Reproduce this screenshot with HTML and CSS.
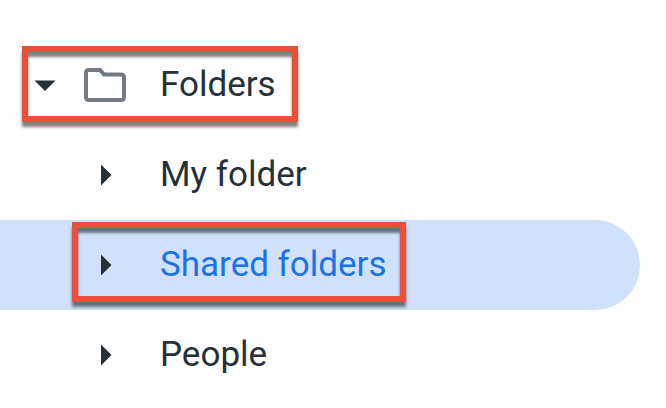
FILE: index.html
```html
<!DOCTYPE html>
<html lang="en">
<head>
<meta charset="utf-8">
<title>Folders</title>
<link rel="stylesheet" href="styles.css">
</head>
<body>
<nav class="tree" aria-label="Folders">
  <a class="row root" href="#folders">
    <svg class="arrow" viewBox="0 0 24 24" aria-hidden="true"><path d="M1.5 7.5h21L12 18z"/></svg>
    <svg class="folder" viewBox="0 0 42 34" aria-hidden="true"><path d="M4.500 2H16l4 4.500h17.500a2.500 2.500 0 0 1 2.500 2.500v20.500a2.500 2.500 0 0 1-2.500 2.500h-33a2.500 2.500 0 0 1-2.500-2.500v-25a2.500 2.500 0 0 1 2.500-2.500z"/></svg>
    <span class="label">Folders</span>
    <span class="callout callout-root"></span>
  </a>
  <a class="row" href="#my-folder">
    <svg class="arrow" viewBox="0 0 24 24" aria-hidden="true"><path d="M7 1.500v21L17.500 12z"/></svg>
    <span class="label">My folder</span>
  </a>
  <a class="row selected" href="#shared" aria-current="page">
    <svg class="arrow" viewBox="0 0 24 24" aria-hidden="true"><path d="M7 1.500v21L17.500 12z"/></svg>
    <span class="label">Shared folders</span>
    <span class="callout callout-shared"></span>
  </a>
  <a class="row" href="#people">
    <svg class="arrow" viewBox="0 0 24 24" aria-hidden="true"><path d="M7 1.500v21L17.500 12z"/></svg>
    <span class="label">People</span>
  </a>
</nav>
</body>
</html>
```
FILE: styles.css
```css
body {
  margin: 0;
  background: #fff;
  font-family: Roboto, "Liberation Sans", sans-serif;
}

.tree {
  padding: 40px 26px 8px 0;
}

.row {
  position: relative;
  display: flex;
  align-items: center;
  height: 90px;
  padding-left: 94px;
  border-radius: 0 45px 45px 0;
  color: #263038;
  font-size: 35px;
  line-height: 44px;
  text-decoration: none;
}

.root {
  padding-left: 33px;
}

.selected {
  background: #d2e1fb;
}

.selected .label {
  color: #1a73e8;
}

.arrow {
  width: 24px;
  height: 24px;
  margin-right: 42px;
  fill: #263038;
}

.root .arrow {
  margin-right: 27px;
}

.folder {
  width: 42px;
  height: 34px;
  margin-right: 34px;
  fill: none;
  stroke: #737982;
  stroke-width: 4;
}

.callout {
  position: absolute;
  box-sizing: border-box;
  border: 6px solid #e9503a;
  box-shadow: 0 5px 3px rgba(0, 0, 0, 0.5), inset 0 5px 3px rgba(0, 0, 0, 0.5);
}

.callout-root {
  left: 22px;
  top: 6px;
  width: 276px;
  height: 76px;
}

.callout-shared {
  left: 72px;
  top: 2px;
  width: 334px;
  height: 80px;
}
```
